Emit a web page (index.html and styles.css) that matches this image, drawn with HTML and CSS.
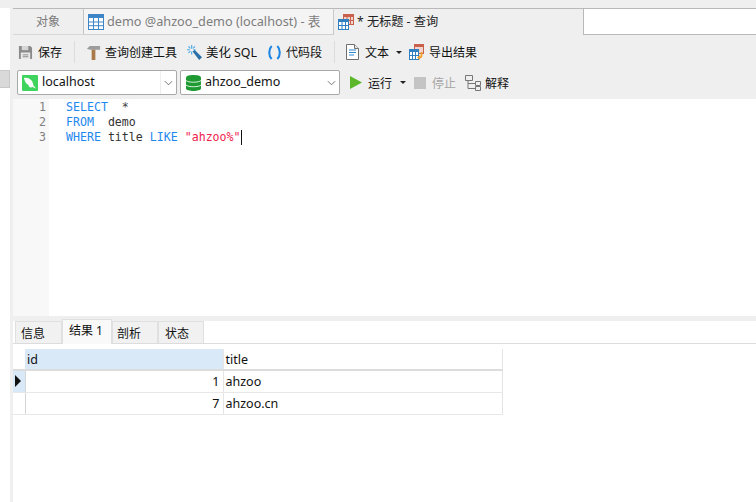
FILE: index.html
```html
<!DOCTYPE html>
<html lang="zh">
<head>
<meta charset="utf-8">
<title>无标题 - 查询</title>
<link rel="stylesheet" href="styles.css">
</head>
<body>
<div class="app">
  <aside class="side"><div class="side-thumb"></div></aside>
  <main class="main">
    <div class="tabbar">
      <div class="tab tab-obj">对象</div>
      <div class="tab tab-table">
        <svg class="ico16" viewBox="0 0 16 16"><rect x=".5" y=".5" width="15" height="15" fill="#fff" stroke="#3d85c6"/><rect x="0" y="0" width="16" height="4" fill="#3d85c6"/><path d="M.5 8h15M.5 11.700h15M5.500 .5v15M10.500 .5v15" stroke="#3d85c6" fill="none"/></svg>
        <span>demo @ahzoo_demo (localhost) - 表</span>
      </div>
      <div class="tab tab-query">
        <svg class="ico-q" viewBox="0 0 16 16"><rect x="5.500" y=".5" width="10" height="10" fill="#f3d4cc" stroke="#c9604c"/><rect x="5" y="0" width="11" height="3" fill="#c9604c"/><path d="M9 0v11M12.500 0v11M5 6.500h11" stroke="#c9604c"/><rect x=".5" y="5.500" width="10" height="10" fill="#fff" stroke="#2f7fc1"/><rect x="0" y="5" width="11" height="3" fill="#2f7fc1"/><path d="M4 5.500v10M7.500 5.500v10M.5 11.500h10" stroke="#2f7fc1"/></svg>
        <span>* 无标题 - 查询</span>
      </div>
      <div class="search"></div>
    </div>

    <div class="toolbar">
      <div class="tool tool-save">
        <svg class="ico15" viewBox="0 0 16 16"><path d="M1.500 1h11.500l2 2v11.500l-.5.5h-13l-.5-.5V1.500z" fill="#8a8a8a"/><rect x="4" y="1" width="7" height="4.500" fill="#d6d6d6"/><rect x="3" y="8" width="10" height="7" fill="#e8e8e8"/><path d="M5 10.500h6M5 12.500h6" stroke="#8a8a8a"/></svg>
        <span>保存</span>
      </div>
      <div class="sep"></div>
      <div class="tool tool-build">
        <svg class="ico15" viewBox="0 0 16 16"><path d="M1 4l3-3h11v4H4z" fill="#9c9c9c"/><path d="M6 5h4v11H6z" fill="#a9794a"/></svg>
        <span>查询创建工具</span>
      </div>
      <div class="tool tool-beauty">
        <svg class="ico15" viewBox="0 0 16 16"><path d="M6 7l2-2 8 8-3 3z" fill="#2b6fa8"/><path d="M5 0v4M5 7v3M0 5h3M7 5h2M1.500 1.500l2 2M8.500 1.500L6.500 3.500M1.500 8.500l2-2" stroke="#4aa8e3" stroke-width="1.200" fill="none"/></svg>
        <span>美化 SQL</span>
      </div>
      <div class="tool tool-snippet">
        <svg class="ico15" viewBox="0 0 15 16"><path d="M4.500 1C1 4.500 1 11.500 4.500 15M10.500 1c3.500 3.500 3.500 10.500 0 14" fill="none" stroke="#1d86e3" stroke-width="2.200"/></svg>
        <span>代码段</span>
      </div>
      <div class="sep sep-b"></div>
      <div class="tool tool-text">
        <svg class="ico-doc" viewBox="0 0 13 16"><path d="M.5 .5h8l4 4v11H.5z" fill="#fff" stroke="#707070"/><path d="M8.500 .5v4h4" fill="#e6e6e6" stroke="#707070"/><path d="M3 6h7M3 8.500h7M3 11h5" stroke="#2f87d0"/></svg>
        <span>文本</span>
        <i class="caret"></i>
      </div>
      <div class="tool tool-export">
        <svg class="ico16" viewBox="0 0 16 16"><rect x="5.500" y=".5" width="9" height="9" fill="#f3d4cc" stroke="#c9604c"/><rect x="5" y="0" width="10" height="3" fill="#c9604c"/><rect x=".5" y="5.500" width="9" height="10" fill="#fff" stroke="#2f7fc1"/><rect x="0" y="5" width="10" height="3" fill="#2f7fc1"/><path d="M3.500 5.500v10M6.500 5.500v10M.5 11.500h9" stroke="#2f7fc1"/><path d="M12.500 8v3.500a2 2 0 0 1-2 2H10" fill="none" stroke="#f0a030" stroke-width="1.800"/><path d="M8 13.500l3-2.500v5z" fill="#f0a030"/></svg>
        <span>导出结果</span>
      </div>
    </div>

    <div class="connbar">
      <div class="combo combo-host">
        <svg class="ico16 leaf" viewBox="0 0 16 16"><rect width="16" height="16" rx="1" fill="#3fd45e"/><path d="M2 3c2-1 6 0 8 3 1 1.500 1 3 1.500 4.500L14 13.500l-3.500-1.500C9 13 7 12 6.500 11 7.500 10.500 6 9.500 5 9 3.500 8 2.500 5.500 2 3z" fill="#fff"/></svg>
        <span class="combo-text">localhost</span>
        <span class="combo-btn"><svg viewBox="0 0 10 6" class="chev"><path d="M1 1l4 4 4-4" fill="none" stroke="#666"/></svg></span>
      </div>
      <div class="combo combo-db">
        <svg class="ico-db" viewBox="0 0 15 16"><path d="M0 2.500C0-.8 15-.8 15 2.500v11c0 3.300-15 3.300-15 0z" fill="#1e9a33"/><path d="M0 5.500c2 2.300 13 2.300 15 0M0 10c2 2.300 13 2.300 15 0" fill="none" stroke="#d8f0dc"/></svg>
        <span class="combo-text">ahzoo_demo</span>
        <span class="combo-btn"><svg viewBox="0 0 10 6" class="chev"><path d="M1 1l4 4 4-4" fill="none" stroke="#666"/></svg></span>
      </div>
      <div class="tool tool-run">
        <svg class="play" viewBox="0 0 12 13"><path d="M0 0l12 6.500L0 13z" fill="#5cb82a"/></svg>
        <span>运行</span>
        <i class="caret"></i>
      </div>
      <div class="tool tool-stop">
        <i class="stop"></i>
        <span>停止</span>
      </div>
      <div class="tool tool-explain">
        <svg class="ico16" viewBox="0 0 16 16"><path d="M.5 .5h7v5h-7zM10.500 6.500h5v4h-5zM10.500 11.500h5v4h-5zM3 5.500v8h7.500M3 8.500h7.500" fill="none" stroke="#777"/></svg>
        <span>解释</span>
      </div>
    </div>

    <div class="editor">
      <div class="gutter"><div>1</div><div>2</div><div>3</div></div>
      <pre class="code"><span class="kw">SELECT</span>  <span class="op">*</span>
<span class="kw">FROM</span>  demo
<span class="kw">WHERE</span> title <span class="kw">LIKE</span> <span class="str">"ahzoo%"</span><span class="cursor"></span></pre>
    </div>

    <div class="splitter"></div>

    <div class="result-tabs">
      <div class="rtab rtab-info">信息</div>
      <div class="rtab rtab-on">结果 1</div>
      <div class="rtab rtab-prof">剖析</div>
      <div class="rtab rtab-stat">状态</div>
    </div>

    <div class="grid-area">
      <table class="grid">
        <colgroup><col class="c-mark"><col class="c-id"><col class="c-title"></colgroup>
        <tr class="head"><th class="mark-head"></th><th class="th-id">id</th><th>title</th></tr>
        <tr><td class="mark mark-on"><i class="arrow"></i></td><td class="num">1</td><td>ahzoo</td></tr>
        <tr><td class="mark"></td><td class="num">7</td><td>ahzoo.cn</td></tr>
      </table>
    </div>
  </main>
</div>
</body>
</html>
```
FILE: styles.css
```css
* { box-sizing: border-box; }
html, body { margin: 0; height: 100%; }
body {
  background: #fff;
  font-family: "Noto Sans", "Noto Sans CJK SC", sans-serif;
  font-size: 12px;
  color: #111;
  overflow: hidden;
}
.app { display: flex; width: 756px; height: 502px; }
.side { width: 13px; flex: none; border-right: 3px solid #efefef; padding-top: 70px; background: linear-gradient(#efefef 0 8px, #fff 8px); }
.side-thumb { width: 10px; height: 18px; background: #d9d9d9; border: 1px solid #c8c8c8; border-left: 0; }
.main { flex: 1; min-width: 0; display: flex; flex-direction: column; }

.tabbar { height: 35px; flex: none; padding-top: 8px; background: #efefef; display: flex; }
.tab { height: 27px; display: flex; align-items: center; border-top: 1px solid #b9b9b9; font-size: 12.700px; }
.tab span { margin-top: -2px; }
.tab-obj { width: 71px; justify-content: center; color: #7a7a7a; font-size: 12px; padding-bottom: 2px; border-bottom: 1px solid #d8d8d8; border-right: 1px solid #c4c4c4; }
.tab-table { width: 250px; gap: 3px; padding-left: 4px; background: #f4f4f4; color: #7d7d7d; border-bottom: 1px solid #d0d0d0; border-right: 1px solid #c9c9c9; white-space: nowrap; }
.tab-query { width: 249px; gap: 3px; padding-left: 4px; color: #222; font-size: 12.200px; }
.search { flex: 1; height: 27px; background: #fff; border: 1px solid #b9b9b9; border-right: 0; }
.ico16 { width: 16px; height: 16px; flex: none; }
.ico15 { width: 15px; height: 15px; flex: none; }
.ico-q { width: 16px; height: 16px; flex: none; }
.ico-doc { width: 13px; height: 16px; flex: none; }
.ico-db { width: 15px; height: 16px; flex: none; }

.toolbar { height: 34px; flex: none; background: #efefef; display: flex; align-items: center; padding-left: 5px; }
.tool { display: flex; align-items: center; gap: 4px; font-size: 12px; white-space: nowrap; }
.tool-save { gap: 5px; }
.sep { width: 1px; height: 22px; background: #dcdcdc; margin: 0 11px 0 12px; }
.tool-build { margin-right: 10px; }
.tool-beauty { margin-right: 10px; font-size: 12.400px; }
.tool-text { gap: 6px; margin-right: 7px; }
.caret { width: 0; height: 0; border: 3px solid transparent; border-top: 3px solid #222; border-bottom: 0; margin-left: 1px; }

.connbar { height: 30px; flex: none; background: #efefef; display: flex; align-items: flex-start; padding: 1px 0 0 4px; }
.combo { height: 25px; background: #fff; border: 1px solid #a9a9a9; border-radius: 2px; display: flex; align-items: center; font-size: 12.500px; }
.combo-host { width: 160px; margin-right: 3px; padding-left: 4px; gap: 4px; }
.combo-db { width: 160px; padding-left: 5px; gap: 4px; margin-right: 10px; }
.combo-text { flex: 1; margin-top: -2px; }
.combo-btn { width: 16px; height: 100%; display: flex; align-items: center; justify-content: center; border-left: 1px solid #eee; }
.combo-db .combo-btn { border-left: 0; }
.chev { width: 9px; height: 6px; }
.tool-run { height: 25px; gap: 6px; margin-right: 8px; }
.tool-run .caret { margin-left: 2px; }
.play { width: 12px; height: 13px; flex: none; }
.tool-stop { height: 25px; color: #a6a6a6; gap: 6px; margin-right: 9px; }
.stop { width: 12px; height: 12px; background: #c4c4c4; display: block; }
.tool-explain { height: 25px; gap: 4px; }

.editor { flex: none; height: 217px; display: flex; background: #fff; }
.gutter { width: 36px; background: #f8f8f8; text-align: right; padding: 1px 3px 0 0; font: 11.600px/15px "DejaVu Sans Mono", monospace; color: #7f7f7f; }
.code { margin: 0; padding: 1px 0 0 17px; font: 11.600px/15px "DejaVu Sans Mono", monospace; color: #333; }
.kw { color: #1e88ee; }
.op { color: #444; }
.str { color: #f0224e; }
.cursor { display: inline-block; width: 1px; height: 15px; background: #111; vertical-align: top; }

.splitter { height: 5px; flex: none; background: #efefef; }
.result-tabs { height: 23px; flex: none; display: flex; align-items: flex-end; padding-left: 2px; border-bottom: 1px solid #dcdcdc; }
.rtab { height: 22px; background: #f1f1f1; border: 1px solid #e0e0e0; border-bottom: 0; font-size: 12px; display: flex; align-items: center; }
.rtab-info { width: 47px; padding-left: 5px; }
.rtab-on { width: 50px; height: 25px; background: #f9f9f9; margin-bottom: -1px; padding: 0 0 5px 6px; }
.rtab-prof { width: 46px; padding-left: 4px; }
.rtab-stat { width: 46px; padding-left: 6px; }

.grid-area { flex: 1; padding-top: 5px; }
.grid { border-collapse: collapse; table-layout: fixed; width: 489px; font-size: 12.500px; }
.c-mark { width: 12px; }
.c-id { width: 198px; }
.c-title { width: 279px; }
.grid th, .grid td { height: 22px; padding: 0 2px; font-weight: 400; text-align: left; white-space: nowrap; border-right: 1px solid #e4e4e4; border-bottom: 1px solid #e8e8e8; }
.grid .head th { height: 21px; border-bottom: 2px solid #dcdcdc; }
.grid .th-id { background: #d9e9f7; }
.grid .mark-head { background: #fff; border-right: 0; border-bottom-color: #dcdcdc; }
.grid .num { text-align: right; padding-right: 3px; }
.grid .mark { background: #fff; padding: 0; border-right: 1px solid #d6d6d6; }
.grid .mark-on { background: #d9e9f7; }
.arrow { display: block; width: 0; height: 0; margin-left: 2px; border: 6px solid transparent; border-left: 6px solid #111; border-right: 0; }
```
